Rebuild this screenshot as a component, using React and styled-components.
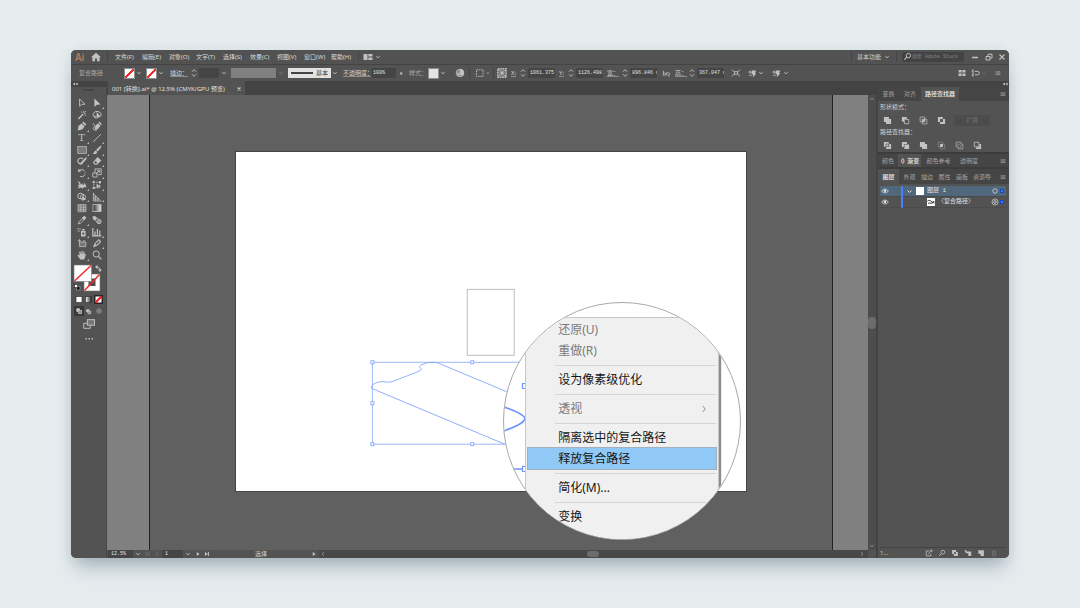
import React from 'react';
import styled, { createGlobalStyle, css } from 'styled-components';

const ui = '"Noto Sans", "Noto Sans CJK SC", sans-serif';
const mono = '"Liberation Mono", "Noto Sans CJK SC", monospace';

const Global = createGlobalStyle`
  * { box-sizing: border-box; }
  html, body { margin: 0; padding: 0; }
  body { background: #e7ecef; font-family: ${ui}; font-size: 6px; line-height: 8px; color: #c6c6c6; }
  button, input, select { font: inherit; color: inherit; border: 0; padding: 0; margin: 0; background: none; }
  svg { display: block; flex: none; }
`;

/* ---------- icons ---------- */

const S = (d, w = 1) => <path d={d} fill="none" stroke="currentColor" strokeWidth={w} />;
const F = (d) => <path d={d} fill="currentColor" fillRule="evenodd" />;

const icons = {
  home: F('M5 0.8 L10 5.2 H8.6 V9.2 H6 V6.4 H4 V9.2 H1.4 V5.2 H0 Z'),
  chevron: S('M2.8 4 L5 6 L7.2 4', 1.1),
  left: S('M6 2.5 L4 5 L6 7.5'),
  right: S('M4 2.5 L6 5 L4 7.5'),
  submenu: S('M4 2.5 L6 5 L4 7.5', 0.7),
  up: S('M2.8 6 L5 4 L7.2 6'),
  play: F('M3.4 2.4 L7 5 L3.4 7.6Z'),
  last: <>{F('M2.4 2.4 L6 5 L2.4 7.6Z')}{S('M6.8 2.4 V7.6', 1.2)}</>,
  first: <>{S('M3 2.4 V7.6')}{S('M7 2.5 L5 5 L7 7.5')}</>,
  stepper: S('M3 3.8 L5 1.6 L7 3.8 M3 6.2 L5 8.4 L7 6.2', 0.9),
  arrange: F('M0.5 2 H4.5 V8 H0.5Z M5.3 2 H9.5 V4.6 H5.3Z M5.3 5.4 H9.5 V8 H5.3Z'),
  search: <><circle cx="6" cy="4" r="2.4" fill="none" stroke="currentColor" />{S('M4.2 5.8 L1.5 8.6', 1.2)}</>,
  minimize: S('M2 5.5 H8', 1.4),
  restore: S('M2 4.5 H6 V8 H2Z M4 4.3 V2.2 H8 V6 H6.2'),
  close: S('M2.5 2.5 L7.5 7.5 M7.5 2.5 L2.5 7.5', 1.1),
  closeTab: S('M2.5 2.5 L7.5 7.5 M7.5 2.5 L2.5 7.5', 2),
  menu: S('M2 3.5 H8 M2 5.2 H8 M2 7 H8', 0.7),
  collapse: F('M5 3 V7 L2 5Z M8.4 3 V7 L5.4 5Z'),
  globe: <><circle cx="5" cy="5" r="3.8" fill="#8a8a8a" stroke="currentColor" strokeWidth="0.8" />{F('M5 1 A4 4 0 0 1 9 5 A4 4 0 0 1 6.6 8.6 L5 5Z')}<circle cx="4" cy="6" r="1.6" fill="#b8b8b8" /></>,
  align: <rect x="1.5" y="1.8" width="6.6" height="6.6" fill="none" stroke="currentColor" strokeDasharray="1.4 1" />,
  reference: <><rect x="0.8" y="0.8" width="8.4" height="8.4" fill="#777" stroke="currentColor" strokeWidth="1.4" strokeDasharray="1.6 0.8" />{F('M3.6 3.6 H6.4 V6.4 H3.6Z')}{S('M2 2 L3.6 3.6 M8 2 L6.4 3.6 M2 8 L3.6 6.4 M8 8 L6.4 6.4', 0.6)}</>,
  link: S('M1.5 2 V7 M1.5 4.6 H3 A1.2 1.2 0 0 1 3 7 H1.5 M6 4.2 A1.4 1.4 0 1 0 6 7 M5.4 4.2 H7 A1.4 1.4 0 0 1 7 7 L8.2 8.6', 0.9),
  transform: S('M1 1.6 L3.4 4 M9 1.6 L6.6 4 M1 8.4 L3.4 6 M9 8.4 L6.6 6 M3.4 3.7 H6.6 V6.3 H3.4Z', 0.9),
  isolate: <>{S('M0.6 3.4 H4 M2.2 1.8 V5 M1.4 7 H4', 1)}{F('M4.4 1.6 H9.2 L7.6 4.6 H9.4 L5.4 9.2 V5.6 H3.8Z')}</>,
  grid: F('M1.6 2 H4.6 V4.6 H1.6Z M5.4 2 H8.4 V4.6 H5.4Z M1.6 5.4 H4.6 V8 H1.6Z M5.4 5.4 H8.4 V8 H5.4Z'),
  snap: S('M2 1.4 V8.6 M4 3.4 H6.6 A1.6 1.6 0 0 1 6.6 6.8 H4 M0.8 3 H2 M0.8 7 H2', 1),
  select: S('M2.6 1 V8.2 L4.6 6.4 L8 6.2Z', 0.9),
  direct: F('M2.4 0.6 V9 L4.8 6.8 L8.6 6.4Z'),
  wand: <>{S('M1.4 9 L6 4.2', 1.4)}{S('M6.8 0.8 V3 M8.8 3.6 H7.2 M4 1.6 L5.4 2.8 M8.8 1.2 L7.6 2.4 M7.6 4.6 L8.6 5.8', 0.9)}</>,
  lasso: <>{S('M3.6 7.6 A4 3.2 0 1 1 8.6 6.2 M2.2 6.4 C3 5.4 4.4 6.4 3.4 8.4', 1)}{F('M4.6 2 V9 L6.4 7.2 L8.8 7Z')}</>,
  pen: F('M0.8 9.4 L1.4 5 L4.6 2.4 L7.6 5.4 L5.2 8.6Z M5.2 1.9 L6.4 0.6 L9.4 3.4 L8.2 4.8Z'),
  curve: <>{F('M2.6 8.8 L3.2 5 L6 2.2 L8.4 4.8 L6 8Z M6.6 1.6 L7.4 0.6 L9.8 3 L8.8 4.2Z')}{S('M0.6 3 C2.4 2 3 5 1.6 6.6 C0.4 8.6 2 9.8 5.4 8.8', 0.9)}</>,
  line: S('M1.2 9 L8.8 1.2', 0.9),
  rect: <rect x="0.8" y="1.6" width="8.6" height="6.8" fill="#7d7d7d" stroke="currentColor" strokeWidth="0.7" />,
  brush: F('M9.4 0.6 L9 2.6 L5.6 6.4 L4 5 L7.6 1.4Z M3.6 5.4 L5.2 6.9 C4.8 9 2.4 9.4 0.8 8.8 C2.4 8 1.8 6 3.6 5.4Z'),
  shaper: <>{S('M5.4 7.4 A3 2.8 0 1 1 6 3', 1.1)}{F('M10 1.4 L9 3.6 L5.4 7.8 L3.2 8.6 L4 6.2 L8.2 1.8Z')}</>,
  eraser: F('M5.6 1 L9.4 4.6 L5 8.8 H2.8 L0.8 6.6Z M2.2 6.4 L3.4 7.8 L4.6 7.6 L5.2 6.8 L3.6 5Z'),
  rotate: <><path d="M2.4 2.4 A3.6 3.6 0 1 1 3 8.4" fill="none" stroke="currentColor" strokeDasharray="6 1 1 1" />{F('M1 0.8 L1.4 4.2 L4.4 3Z')}</>,
  scale: S('M0.8 5 H5 V9 H0.8Z M3 4.6 V0.9 H9.2 V6.6 H5.6 M4 6 L7.4 2.6 M5.2 2.6 H7.4 V4.8', 0.9),
  warp: F('M0.8 1.4 C3.4 1.4 3.4 3.6 4 5 L5.2 3 L6 5.4 L7.8 2.8 L9.6 7.6 L7.4 7 L5.4 8.6 L3.6 7.4 L0.4 8.8 L2.2 6.4 L0.6 5.6 L2.6 4.6Z'),
  free: <><rect x="1.8" y="2.2" width="6" height="5.6" fill="none" stroke="currentColor" strokeDasharray="1.4 0.8" />{F('M0.6 1 H2.6 V3 H0.6Z M7 1 H9 V3 H7Z M0.6 7 H2.6 V9 H0.6Z M4.6 3.4 V8.6 L6 7.2 L8.6 7Z')}</>,
  shape: <><circle cx="3.6" cy="4" r="2.8" fill="none" stroke="currentColor" /><circle cx="6" cy="5" r="2.6" fill="none" stroke="currentColor" strokeWidth="0.8" />{F('M5.4 4 V9.4 L6.8 8 L9.2 7.8Z')}</>,
  perspective: S('M1.4 0.8 V9 L9.4 9 M1.4 1.6 L8.4 8.2 M1.4 5 H4.6 M3.4 3.6 V9 M5.8 6 V9 M1.4 7 H6.8', 0.8),
  mesh: <><rect x="1" y="1.6" width="8" height="7" fill="#777" />{S('M1 1.6 H9 V8.6 H1Z M1 4 C4 2.6 6 6 9 4 M1 6.6 C4 5 6 8 9 6.4 M3.6 1.6 C5 4 2.6 6 4 8.6 M6.4 1.6 C7.6 4 5.4 6 6.6 8.6', 0.7)}</>,
  gradient: <rect x="1" y="1.6" width="8" height="7" fill="url(#ramp)" stroke="currentColor" strokeWidth="0.8" />,
  dropper: <>{S('M1.2 9 L2 6.8 L5.4 3.4 L6.8 4.8 L3.4 8.2Z', 0.9)}{F('M4.8 2.6 L6 2 L7.4 0.8 L9.4 2.8 L8 4.2 L7.6 5.4Z')}</>,
  blend: <>{F('M0.8 1 L4 1.6 L5.6 4.6 L3 5.6 L0.8 4Z')}<circle cx="7" cy="6.6" r="2.1" fill="#8a8a8a" stroke="currentColor" /><circle cx="5" cy="4.8" r="1.6" fill="#707070" stroke="currentColor" strokeWidth="0.7" /></>,
  spray: <>{F('M4 4 H8.6 V9.4 H4Z M5 2 H7.6 V3.4 H5Z M0.6 1 H1.8 V2.2 H0.6Z M2.6 1.2 H3.6 V2.4 H2.6Z M0.6 3.4 H1.6 V4.6 H0.6Z M2.2 3.4 H3.2 V4.4 H2.2Z')}<circle cx="6.3" cy="6.6" r="1.1" fill="#535353" /></>,
  graph: S('M0.8 1 V8.8 H9.4 M3 8.4 V4.6 M5.4 8.4 V2 M7.8 8.4 V3.4', 1.2),
  artboard: <><rect x="2.4" y="4" width="6.4" height="4.6" fill="#777" />{S('M0.6 2.8 H4 M2.4 1 V4 M2.4 4 H8.8 V8.6 H2.4Z M6 2.8 H8', 0.8)}</>,
  slice: F('M1 9.4 L2.4 5.6 L6.6 1 L9.4 3.4 L5.6 7.4Z M3.2 6 L4.4 7 L7.8 3.6 L6.6 2.6Z'),
  hand: F('M2.6 5.6 L1 4.6 L0.6 5.6 L3.2 9.4 H7.2 L9 4.2 L8 3.8 L7.2 5.2 L7.6 1.6 L6.6 1.4 L5.8 4.6 L5.4 0.8 L4.4 0.8 L4.4 4.6 L3.2 1.4 L2.2 1.8Z'),
  zoom: <><circle cx="4.2" cy="4" r="3.1" fill="none" stroke="currentColor" />{S('M6.4 6.4 L9.2 9.2', 1.3)}</>,
  drawNormal: <><circle cx="4" cy="4" r="2.6" fill="currentColor" /><rect x="4.4" y="4.4" width="4" height="4" fill="#8d8d8d" stroke="currentColor" strokeWidth="0.8" /></>,
  drawInside: <><circle cx="5" cy="5" r="2.8" fill="none" stroke="currentColor" strokeWidth="0.7" />{F('M4.4 3.6 L6.8 5 L4.4 6.4Z')}</>,
  screen: <>{S('M0.6 4.4 H6 V8.6 H0.6Z', 0.8)}<rect x="3.6" y="1.4" width="6" height="4.6" fill="#777" stroke="currentColor" strokeWidth="0.8" /></>,
  unite: F('M1 1 H6.6 V3.4 H9 V9 H3.4 V6.6 H1Z'),
  minusFront: <>{F('M1 1 H6.4 V3.4 H3.4 V6.4 H1Z')}{S('M3.8 3.8 H8.6 V8.6 H3.8Z', 0.9)}</>,
  intersect: <>{S('M1.2 1.2 H6.4 V6.4 H1.2Z M3.6 3.6 H8.8 V8.8 H3.6Z', 0.8)}{F('M3.6 3.6 H6.4 V6.4 H3.6Z')}</>,
  exclude: F('M1 1 H6.6 V3.4 H9 V9 H3.4 V6.6 H1Z M3.4 3.4 V6.6 H6.6 V3.4Z'),
  divide: <>{F('M1 1 H6.4 V3.4 H9 V9 H3.4 V6.4 H1Z')}<path d="M3.4 6.2 V3.4 H6.4 V6.4 H3.4" stroke="#535353" strokeWidth="0.8" fill="none" /></>,
  trim: <>{F('M1 1 H6.6 V3.4 H3.2 V6.6 H1Z M3.8 4 H9 V9 H3.8Z')}</>,
  crop: <>{S('M1.4 1.4 H6.4 V3.4 M1.4 1.4 V6.4 H3.4 M6.6 3.6 H8.6 V8.6 H3.6 V6.6', 0.4)}{F('M3.4 3.4 H6.6 V6.6 H3.4Z')}</>,
  outline: S('M1.3 1.3 H6.5 V3.5 H8.7 V8.7 H3.5 V6.5 H1.3Z M3.5 3.5 H5 M3.5 3.5 V5 M6.5 6.5 V5 M6.5 6.5 H5', 0.7),
  minusBack: <>{S('M1.4 1.4 H6.4 V6.4 H1.4Z', 0.9)}{F('M7 3.4 H9 V9 H3.4 V7 H7Z')}</>,
  eye: <>{S('M0.8 5 C3 1.8 7 1.8 9.2 5 C7 8.2 3 8.2 0.8 5Z', 1)}<circle cx="5" cy="4.8" r="1.7" fill="currentColor" /></>,
  ring: <circle cx="5" cy="5" r="2.8" fill="none" stroke="currentColor" strokeWidth="0.9" />,
  target: <><circle cx="5" cy="5" r="3.8" fill="none" stroke="currentColor" strokeWidth="0.8" /><circle cx="5" cy="5" r="1.7" fill="none" stroke="currentColor" strokeWidth="0.9" /></>,
  export: S('M5 2.4 H1.6 V8.6 H7.4 V6 M4 6 L8.4 1.6 M6 1.4 H8.6 V4', 1),
  mask: <>{F('M1.4 1.4 H6.4 V3.6 H8.6 V8.6 H3.6 V6.4 H1.4Z')}<circle cx="5" cy="5" r="1.2" fill="#4c4c4c" /></>,
  sublayer: F('M0.6 1.6 H3 V3 H9 V8.6 H5.4 V5.4 H2.4Z'),
  newLayer: F('M1.6 1.6 H8.6 V8.6 H4.4 V5.8 H1.6Z'),
  trash: S('M2 2.8 H8 M3 2.8 V8.6 H7 V2.8 M4 1.6 H6 M5 4 V7.4', 0.9),
};

const Icon = ({ name, size = 10, dim, ...rest }) => (
  <svg width={size} height={size} viewBox="0 0 10 10" opacity={dim ? 0.35 : 1} aria-hidden="true" {...rest}>
    {name === 'gradient' && (
      <defs>
        <linearGradient id="ramp"><stop offset="0" stopColor="#2e2e2e" /><stop offset="1" stopColor="#eee" /></linearGradient>
      </defs>
    )}
    {icons[name]}
  </svg>
);

/* ---------- shared parts ---------- */

const IconButton = styled.button`
  display: flex;
  align-items: center;
  justify-content: center;
  align-self: center;
  flex: none;
  width: ${(p) => p.$w || 10}px;
  height: 10px;
  margin-left: ${(p) => p.$gap || 0}px;
  border-radius: 1px;
  background: ${(p) => (p.$on ? '#383838' : 'none')};
  color: ${(p) => (p.$dim ? '#777' : '#c2c2c2')};
`;

const Tool = ({ icon, label, size, ...rest }) => (
  <IconButton type="button" aria-label={label} {...rest}><Icon name={icon} size={size} /></IconButton>
);

const Divider = styled.span`
  flex: none;
  width: 1px;
  height: 11px;
  margin-left: ${(p) => p.$gap || 0}px;
  background: #454545;
`;

const Spacer = styled.span`flex: 1;`;

/* ---------- window ---------- */

const Page = styled.main`
  min-height: 100vh;
  display: flex;
  padding: 50px 71px;
`;

const Frame = styled.div`
  flex: 1;
  min-width: 0;
  display: flex;
  border-radius: 5px;
  box-shadow: 0 14px 18px -5px rgba(112, 134, 146, 0.5), 0 2px 12px rgba(130, 150, 160, 0.22);
`;

const Window = styled.div`
  flex: 1;
  min-width: 0;
  display: flex;
  flex-direction: column;
  border-radius: 5px;
  overflow: hidden;
  background: #535353;
`;

const MenuBar = styled.header`
  display: flex;
  align-items: center;
  height: 15px;
  padding: 0 2px 1px 4px;
  background: #525252;
  border-bottom: 1px solid #434343;
`;

const Logo = styled.span`
  width: 12px;
  font: 600 10px/12px "Open Sans", sans-serif;
  color: #b98060;
`;

const Menus = styled.nav`
  display: grid;
  grid-template-columns: repeat(9, 27px);
  margin-left: 7px;
`;

const MenuButton = styled.button`
  text-align: left;
  white-space: nowrap;
  color: #dadada;
`;

const Search = styled.label`
  display: flex;
  align-items: center;
  width: 62px;
  height: 10px;
  margin: 0 6px 0 5px;
  padding-left: 1px;
  background: #434343;
  border-radius: 2px;
  input { width: 50px; font: 5px/8px ${mono}; outline: 0; }
  input::placeholder { color: #858585; opacity: 1; }
`;

const ControlBar = styled.div`
  display: flex;
  align-items: center;
  height: 16px;
  padding: 0 6px 0 8px;
  background: #535353;
  overflow: hidden;
`;

const Label = styled.label`
  flex: none;
  width: ${(p) => p.$w}px;
  margin-left: ${(p) => p.$gap || 0}px;
  white-space: nowrap;
  color: ${(p) => (p.$soft ? '#ababab' : '#d4d4d4')};
  ${(p) => p.$line && css`text-decoration: underline; text-decoration-color: #8b8b8b; text-underline-offset: 1px;`}
`;

const Field = styled.input`
  flex: none;
  width: ${(p) => p.$w}px;
  height: 10px;
  padding-left: 2px;
  background: #454545;
  border-radius: 1px;
  font: 5px/10px ${mono};
  color: #e2e2e2;
  outline: 0;
`;

const Swatch = styled.button`
  flex: none;
  width: 11px;
  height: 11px;
  margin-left: ${(p) => p.$gap || 0}px;
  border: 1px solid #8e8e8e;
  background: ${(p) => (p.$none ? 'linear-gradient(135deg, #fff 42%, #f02c2c 42%, #f02c2c 58%, #fff 58%)' : '#e3e3e3')};
`;

const Profile = styled.button`
  flex: none;
  width: 45px;
  height: 10px;
  margin-left: 2px;
  background: #808080;
`;

const BrushButton = styled.button`
  flex: none;
  display: flex;
  align-items: center;
  gap: 3px;
  width: 43px;
  height: 10px;
  padding: 0 3px;
  margin-left: 2px;
  background: #e2e2e2;
  color: #333;
  white-space: nowrap;
`;

const BrushLine = styled.span`flex: 1; height: 2px; background: #444;`;

/* ---------- body ---------- */

const Body = styled.div`
  flex: 1;
  min-height: 0;
  display: flex;
`;

const Toolbar = styled.aside`
  width: 36px;
  flex: none;
  background: #535353;
  border-right: 1px solid #464646;
`;

const Grip = styled.div`
  display: flex;
  align-items: center;
  justify-content: ${(p) => (p.$end ? 'flex-end' : 'flex-start')};
  height: 6px;
  background: #434343;
  color: #bbb;
`;

const Handle = styled.div`
  width: 11px;
  height: 2px;
  margin: 2px auto 6px;
  background: #454545;
`;

const ToolGrid = styled.div`
  display: grid;
  grid-template-columns: 15px 15px;
  grid-template-rows: repeat(14, 1fr);
  height: 164px;
  margin: 0 0 0 3px;
`;

const ToolCell = styled.button`
  position: relative;
  display: flex;
  align-items: center;
  justify-content: center;
  color: #c2c2c2;
  &::after {
    content: '';
    display: ${(p) => (p.$more ? 'block' : 'none')};
    position: absolute;
    right: 0;
    bottom: 0;
    border: 1px solid transparent;
    border-right-color: #bbb;
    border-bottom-color: #bbb;
  }
`;

const TypeGlyph = styled.span`font: 10px/10px "DejaVu Serif", serif;`;

const Swatches = styled.svg`margin: 3px 0 0 2px;`;

const ToolRow = styled.div`
  display: flex;
  justify-content: center;
  align-items: center;
  height: ${(p) => p.$h || 12}px;
`;

const Workspace = styled.section`
  flex: 1;
  min-width: 0;
  display: flex;
  flex-direction: column;
`;

const TabStrip = styled.div`
  display: flex;
  height: 14px;
  background: #434343;
`;

const DocTab = styled.div`
  display: flex;
  align-items: center;
  gap: 5px;
  margin: 0 0 0 1px;
  padding: 1px 1px 0 4px;
  width: 137px;
  background: #535353;
  color: #e0e0e0;
  white-space: nowrap;
`;

const DocName = styled.span`flex: 1;`;

const Stage = styled.div`
  flex: 1;
  min-height: 0;
  display: flex;
`;

const Pasteboard = styled.div`
  flex: 1;
  min-width: 0;
  display: flex;
  padding: 0 35px 0 42px;
  background: #808080;
`;

const Canvas = styled.div`
  flex: 1;
  display: flex;
  align-items: center;
  justify-content: center;
  background: #606060;
  border: solid #222;
  border-width: 0 1px;
`;

const Artboard = styled.div`
  position: relative;
  width: 75%;
  aspect-ratio: 512 / 342;
  margin-bottom: 2px;
  background: #fff;
  border: 1px solid #444;
`;

const Drawing = styled.svg`width: 100%; height: 100%;`;

const Lens = styled.div`
  position: absolute;
  left: 267px;
  top: 150px;
  width: 238px;
  height: 238px;
  border: 1px solid #a9a9a9;
  border-radius: 50%;
  overflow: hidden;
  background: #fff;
`;

const LensArt = styled.svg`
  position: absolute;
  left: 0;
  top: 0;
`;

const ContextMenu = styled.div`
  position: relative;
  width: 194px;
  margin: 14px 0 0 21px;
  height: 230px;
  padding: 1px 2px;
  background: #f0f0f0;
  border: 1px solid #c6c6c6;
  box-shadow: 2px 2px 1px #8d8d8d;
`;

const ContextItem = styled.button`
  display: flex;
  align-items: center;
  justify-content: space-between;
  width: 100%;
  height: 21px;
  padding: 1px 6px 0 30px;
  font: 12px/20px ${ui};
  white-space: nowrap;
  color: ${(p) => (p.disabled ? '#7b7b7b' : '#161616')};
  ${(p) => p.$active && css`background: #90c8f6; box-shadow: 0 0 0 1px #a4b1bc;`}
`;

const ContextRule = styled.hr`
  height: 8px;
  margin: 0 0 0 27px;
  border: 0;
  background: linear-gradient(#d5d5d5, #d5d5d5) 0 4px / 100% 1px no-repeat;
`;

const Scroll = styled.div`
  flex: none;
  width: 8px;
  display: flex;
  flex-direction: column;
  align-items: center;
  justify-content: space-between;
  background: #4d4d4d;
  color: #999;
`;

const Thumb = styled.span`
  width: ${(p) => (p.$wide ? 12 : 8)}px;
  height: ${(p) => (p.$wide ? 6 : 12)}px;
  border-radius: 4px;
  background: #6c6c6c;
`;

const Status = styled.footer`
  display: flex;
  align-items: center;
  height: 8px;
  background: #535353;
  overflow: hidden;
`;

const Pick = styled.select`
  appearance: none;
  width: ${(p) => p.$w}px;
  height: 8px;
  margin-left: 1px;
  padding-left: 3px;
  font: 5px/8px ${mono};
  background: #454545;
  color: #e6e6e6;
  outline: 0;
`;

const StatusText = styled.span`margin: 0 42px 0 44px; color: #d2d2d2;`;

const HTrack = styled.div`
  flex: 1;
  display: flex;
  align-items: center;
  justify-content: space-between;
  height: 8px;
  padding-right: 2px;
  background: #484848;
  color: #999;
`;

/* ---------- panels ---------- */

const Panels = styled.aside`
  flex: none;
  width: 133px;
  display: flex;
  flex-direction: column;
  background: #535353;
  border-left: 2px solid #434343;
`;

const Tabs = styled.div`
  display: flex;
  align-items: stretch;
  height: ${(p) => p.$h || 14}px;
  padding-right: 1px;
  border-top: ${(p) => (p.$split ? '2px solid #3c3c3c' : '0')};
  background: #454545;
`;

const Tab = styled.button`
  flex: none;
  width: ${(p) => p.$w}px;
  text-align: center;
  white-space: nowrap;
  background: ${(p) => (p.$on ? '#535353' : 'none')};
  color: ${(p) => (p.$on ? '#ececec' : '#a3a3a3')};
  font-weight: ${(p) => (p.$on ? 500 : 400)};
`;

const Pathfinder = styled.div`
  height: 51px;
  padding: 2px 0 0 2px;
`;

const PanelLabel = styled.div`
  height: 9px;
  line-height: 9px;
  color: #d2d2d2;
`;

const Ops = styled.div`
  display: flex;
  align-items: center;
  height: 16px;
  gap: 8px;
  padding-left: 2px;
`;

const Expand = styled.button`
  width: 36px;
  height: 11px;
  background: #4c4c4c;
  color: #6d6d6d;
`;

const Layers = styled.div`
  flex: 1;
  margin: 2px 3px 0 2px;
  border-bottom: 1px solid #444;
`;

const LayerRow = styled.div`
  display: flex;
  align-items: center;
  height: 11px;
  padding-left: 1px;
  background: ${(p) => (p.$on ? '#50677c' : 'none')};
  border-bottom: 1px solid #4a4a4a;
  color: #e0e0e0;
`;

const LayerBar = styled.span`
  width: 2px;
  height: 11px;
  margin: 0 ${(p) => p.$after}px 0 12px;
  background: #4a7dff;
`;

const LayerThumb = styled.span`
  width: 8px;
  height: 8px;
  margin: 0 3px 0 2px;
  background: #fff;
  color: #222;
`;

const LayerName = styled.span`flex: 1; font-family: ${mono}; white-space: nowrap;`;

const Mark = styled.span`
  width: 4px;
  height: 4px;
  margin: 0 2px 0 1px;
  border: 1px solid #1647c8;
  background: #3f78ff;
`;

const PanelFooter = styled.footer`
  display: flex;
  align-items: center;
  height: 10px;
  padding: 0 10px 0 2px;
  gap: 3px;
`;

/* ---------- data ---------- */

const menus = ['文件(F)', '编辑(E)', '对象(O)', '文字(T)', '选择(S)', '效果(C)', '视图(V)', '窗口(W)', '帮助(H)'];

const tools = [
  ['select', '选择'], ['direct', '直接选择', 1],
  ['wand', '魔棒'], ['lasso', '套索'],
  ['pen', '钢笔', 1], ['curve', '曲率'],
  ['type', '文字', 1], ['line', '直线段', 1],
  ['rect', '矩形', 1], ['brush', '画笔', 1],
  ['shaper', 'Shaper', 1], ['eraser', '橡皮擦', 1],
  ['rotate', '旋转', 1], ['scale', '比例缩放', 1],
  ['warp', '变形', 1], ['free', '自由变换', 1],
  ['shape', '形状生成器', 1], ['perspective', '透视网格', 1],
  ['mesh', '网格'], ['gradient', '渐变'],
  ['dropper', '吸管', 1], ['blend', '混合'],
  ['spray', '符号喷枪', 1], ['graph', '柱形图', 1],
  ['artboard', '画板'], ['slice', '切片', 1],
  ['hand', '抓手', 1], ['zoom', '缩放'],
];

const handles = [[137, 210], [237, 210], [137, 251], [137, 292], [237, 292]];

/* ---------- sections ---------- */

const NumberField = ({ id, label, value, w, gap }) => (
  <>
    <Label htmlFor={id} $w={w} $gap={gap} $line>{label}</Label>
    <Tool icon="stepper" label={`${label} 步进`} />
    <Field id={id} $w={27} defaultValue={value} />
  </>
);

const Controls = () => (
  <ControlBar>
    <Label as="span" $w={45} $soft>复合路径</Label>
    <Swatch $none type="button" aria-label="填色" />
    <Tool icon="chevron" label="填色选项" $w={8} size={8} />
    <Swatch $none $gap={3} type="button" aria-label="描边颜色" />
    <Tool icon="chevron" label="描边选项" $w={8} size={8} />
    <Label htmlFor="stroke" $w={19} $gap={5} $line>描边：</Label>
    <Tool icon="stepper" label="描边步进" />
    <Field id="stroke" $w={20} />
    <Tool icon="chevron" label="描边粗细" size={8} />
    <Profile type="button" aria-label="变量宽度" />
    <Tool icon="chevron" label="宽度配置" size={8} $dim />
    <BrushButton type="button"><BrushLine />基本</BrushButton>
    <Tool icon="chevron" label="画笔定义" $w={8} size={8} />
    <Label htmlFor="opacity" $w={28} $gap={4} $line>不透明度：</Label>
    <Spacer hidden />
    <Field id="opacity" $w={25} defaultValue="100%" />
    <Tool icon="play" label="不透明度滑块" size={7} $w={11} />
    <Label as="span" $w={16} $gap={2} $soft>样式：</Label>
    <Swatch $gap={3} type="button" aria-label="图形样式" />
    <Tool icon="chevron" label="样式选项" $w={8} size={8} />
    <Tool icon="globe" label="重新着色" $gap={8} />
    <Divider $gap={4} />
    <Tool icon="align" label="对齐" $gap={5} />
    <Tool icon="chevron" label="对齐选项" $w={5} size={6} />
    <Divider $gap={3} />
    <Tool icon="reference" label="参考点" $gap={3} />
    <NumberField id="x" label="X:" value="1061.375" w={7} gap={4} />
    <NumberField id="y" label="Y:" value="1126.498" w={7} gap={4} />
    <NumberField id="w" label="宽：" value="896.846 m" w={13} gap={4} />
    <Tool icon="link" label="约束比例" $gap={4} size={9} />
    <NumberField id="h" label="高：" value="367.047 m" w={12} gap={4} />
    <Tool icon="transform" label="变换" $gap={7} />
    <Tool icon="isolate" label="隔离" $gap={6} size={9} />
    <Tool icon="chevron" label="隔离选项" $w={8} size={8} />
    <Tool icon="isolate" label="编辑相似形状" $gap={6} size={9} />
    <Tool icon="chevron" label="相似选项" $w={10} size={8} />
    <Spacer />
    <Tool icon="grid" label="像素网格" />
    <Tool icon="snap" label="贴紧" $gap={4} />
    <Tool icon="chevron" label="贴紧选项" $w={6} size={6} $dim />
    <Tool icon="menu" label="面板菜单" $gap={6} size={8} />
  </ControlBar>
);

const Artwork = () => (
  <Drawing viewBox="1 1 510 340" fill="none" aria-hidden="true">
    <rect x="232.5" y="138.5" width="47" height="66" stroke="#bdbdbd" />
    <g stroke="#85a5fa" strokeWidth="0.9">
      <path d="M137 211.5 H300 M137.5 211 V293 M137 293.5 H290" strokeWidth="0.8" />
      <path d="M272 241 L206 213.4 C200 210.6 193 211 187 214 C183 215.6 185 216 186.5 218.6 C185 221 178 222.6 157 231 C151 232.4 149 229.4 142 231.8 C137 234 136 235 136.8 237.6 L270 293.5" />
      <g fill="#fff">
        {handles.map(([x, y]) => (
          <rect key={`${x}-${y}`} x={x - 1} y={y} width="3" height="3" />
        ))}
      </g>
    </g>
  </Drawing>
);

const Magnifier = () => (
  <Lens>
    <LensArt width="22" height="238" viewBox="0 0 22 238" fill="none" stroke="#6f95fb" aria-hidden="true">
      <path d="M0 104 C12 108 20 112 21 115.5 C20 120 12 123 0 128" strokeWidth="1.7" />
      <path d="M10 166 H19" strokeWidth="1.4" />
      <path d="M22 80.5 H18.5 V85.5 H22 M22 163.5 H18.5 V168.5 H22" strokeWidth="1.2" />
    </LensArt>
    <ContextMenu role="menu">
      <ContextItem role="menuitem" disabled>还原(U)</ContextItem>
      <ContextItem role="menuitem" disabled>重做(R)</ContextItem>
      <ContextRule />
      <ContextItem role="menuitem">设为像素级优化</ContextItem>
      <ContextRule />
      <ContextItem role="menuitem" disabled>透视<Icon name="submenu" size={12} /></ContextItem>
      <ContextRule />
      <ContextItem role="menuitem">隔离选中的复合路径</ContextItem>
      <ContextItem role="menuitem" $active>释放复合路径</ContextItem>
      <ContextRule />
      <ContextItem role="menuitem">简化(M)...</ContextItem>
      <ContextRule />
      <ContextItem role="menuitem">变换</ContextItem>
    </ContextMenu>
  </Lens>
);

const ToolPanel = () => (
  <Toolbar>
    <Grip><Icon name="collapse" size={8} /></Grip>
    <Handle />
    <ToolGrid>
      {tools.map(([name, label, more]) => (
        <ToolCell key={name} type="button" aria-label={label} $more={more}>
          {name === 'type' ? <TypeGlyph>T</TypeGlyph> : <Icon name={name} />}
        </ToolCell>
      ))}
    </ToolGrid>
    <Swatches width="30" height="29" viewBox="0 0 30 29" aria-hidden="true">
      <rect x="11" y="10" width="16" height="17" fill="#fff" stroke="#777" strokeWidth="0.6" />
      <rect x="15.5" y="14.5" width="7" height="7.5" fill="#4f4f4f" />
      <path d="M11.5 26.5 L26.5 10.5" stroke="#ee2b2b" strokeWidth="1.5" />
      <rect x="1" y="1" width="17.5" height="16.5" fill="#fff" stroke="#777" strokeWidth="0.6" />
      <path d="M1.5 17 L18 1.5" stroke="#ee2b2b" strokeWidth="1.5" />
      <path d="M23.5 3 C26 3 27 4 27 6.5" stroke="#c4c4c4" fill="none" />
      <path d="M24.5 0.8 L22 3 L24.5 5.2 Z M24.8 5.6 H29 L27 8 Z" fill="#c4c4c4" />
      <rect x="3.5" y="22.5" width="3.5" height="3.5" fill="#111" stroke="#aaa" strokeWidth="0.6" />
      <rect x="1.5" y="20.5" width="3" height="3" fill="#fff" stroke="#222" strokeWidth="0.6" />
    </Swatches>
    <ToolRow>
      <svg width="29" height="9" viewBox="0 0 29 9" aria-hidden="true">
        <defs><linearGradient id="fade"><stop offset="0" stopColor="#fff" /><stop offset="1" stopColor="#222" /></linearGradient></defs>
        <rect x="2" y="1.5" width="6" height="6" fill="#fff" stroke="#333" strokeWidth="0.7" />
        <rect x="11.5" y="1.5" width="6" height="6" fill="url(#fade)" stroke="#333" strokeWidth="0.7" />
        <rect x="20" y="0" width="9" height="9" fill="#262626" />
        <rect x="21.5" y="1.5" width="6" height="6" fill="#fff" />
        <path d="M21.5 7.5 L27.5 1.5" stroke="#f01818" strokeWidth="2.2" />
      </svg>
    </ToolRow>
    <ToolRow>
      <Tool icon="drawNormal" label="正常绘图" size={8} $on />
      <Tool icon="drawNormal" label="背面绘图" size={7} />
      <Tool icon="drawInside" label="内部绘图" size={8} />
    </ToolRow>
    <ToolRow $h={14}><Tool icon="screen" label="屏幕模式" size={12} $w={12} /></ToolRow>
    <ToolRow $h={14}>
      <svg width="10" height="10" viewBox="0 0 10 10" fill="#bcbcbc" aria-hidden="true">
        <rect x="1.5" y="5" width="1.5" height="1.5" /><rect x="4.5" y="5" width="1.5" height="1.5" /><rect x="7.5" y="5" width="1.5" height="1.5" />
      </svg>
    </ToolRow>
  </Toolbar>
);

const PanelMenu = () => <Tool icon="menu" label="面板菜单" size={8} />;

const SidePanels = () => (
  <Panels>
    <Grip $end><Icon name="collapse" size={8} /></Grip>
    <Tabs $h={14}>
      <Tab $w={21}>变换</Tab><Tab $w={22}>对齐</Tab><Tab $w={38} $on>路径查找器</Tab>
      <Spacer /><PanelMenu />
    </Tabs>
    <Pathfinder>
      <PanelLabel>形状模式：</PanelLabel>
      <Ops>
        {['unite', 'minusFront', 'intersect', 'exclude'].map((n) => <Tool key={n} icon={n} label={n} size={9} />)}
        <Expand type="button">扩展</Expand>
      </Ops>
      <PanelLabel>路径查找器：</PanelLabel>
      <Ops>
        {['divide', 'trim', 'unite', 'crop', 'outline', 'minusBack'].map((n) => <Tool key={n} icon={n} label={n} size={9} />)}
      </Ops>
    </Pathfinder>
    <Tabs $h={15} $split>
      <Tab $w={20}>颜色</Tab><Tab $w={23} $on>◊ 渐变</Tab><Tab $w={35}>颜色参考</Tab><Tab $w={26}>透明度</Tab>
      <Spacer /><PanelMenu />
    </Tabs>
    <Tabs $h={17} $split>
      <Tab $w={21} $on>图层</Tab><Tab $w={21}>外观</Tab><Tab $w={14}>描边</Tab><Tab $w={21}>属性</Tab><Tab $w={14}>画板</Tab><Tab $w={26}>资源导</Tab>
      <Spacer /><PanelMenu />
    </Tabs>
    <Layers>
      <LayerRow $on>
        <Icon name="eye" size={8} />
        <LayerBar $after={2} />
        <Icon name="chevron" size={9} />
        <LayerThumb />
        <LayerName>图层 1</LayerName>
        <Icon name="ring" size={8} /><Mark />
      </LayerRow>
      <LayerRow>
        <Icon name="eye" size={8} />
        <LayerBar $after={22} />
        <LayerThumb>
          <svg width="8" height="8" viewBox="0 0 8 8" fill="none" stroke="currentColor" aria-hidden="true">
            <path d="M0.5 3 C3 1 4 4 7.5 5 M1 5.5 C3 4 5 7 7 3" />
          </svg>
        </LayerThumb>
        <LayerName>〈复合路径〉</LayerName>
        <Icon name="target" size={8} /><Mark />
      </LayerRow>
    </Layers>
    <PanelFooter>
      1...
      <Spacer />
      {['export', 'search', 'mask', 'sublayer', 'newLayer'].map((n) => <Tool key={n} icon={n} label={n} size={8} />)}
      <Tool icon="trash" label="删除" size={8} $dim />
    </PanelFooter>
  </Panels>
);

export default function App() {
  return (
    <>
      <Global />
      <Page>
        <Frame>
          <Window>
            <MenuBar>
              <Logo>Ai</Logo>
              <Tool icon="home" label="主页" $gap={4} />
              <Divider $gap={6} />
              <Menus>{menus.map((m) => <MenuButton key={m} type="button">{m}</MenuButton>)}</Menus>
              <Divider />
              <Tool icon="arrange" label="排列文档" $gap={4} />
              <Tool icon="chevron" label="排列选项" size={8} />
              <Spacer />
              <Divider />
              <MenuButton type="button"><Label as="span" $gap={5}>基本功能</Label></MenuButton>
              <Tool icon="chevron" label="工作区" size={8} $gap={1} />
              <Divider $gap={4} />
              <Search><Icon name="search" size={9} /><input placeholder="搜索 Adobe Stock" aria-label="搜索 Adobe Stock" /></Search>
              <Tool icon="minimize" label="最小化" />
              <Tool icon="restore" label="还原" $gap={4} />
              <Tool icon="close" label="关闭" $gap={3} />
            </MenuBar>
            <Controls />
            <Body>
              <ToolPanel />
              <Workspace>
                <TabStrip>
                  <DocTab>
                    <DocName>001 [转换].ai* @ 12.5% (CMYK/GPU 预览)</DocName>
                    <Tool icon="closeTab" label="关闭文档" size={6} />
                  </DocTab>
                </TabStrip>
                <Stage>
                  <Pasteboard>
                    <Canvas>
                      <Artboard><Artwork /><Magnifier /></Artboard>
                    </Canvas>
                  </Pasteboard>
                  <Scroll><Icon name="up" size={8} /><Thumb /><Icon name="chevron" size={8} /></Scroll>
                </Stage>
                <Status>
                  <Pick $w={25} aria-label="缩放级别"><option>12.5%</option></Pick>
                  <Tool icon="chevron" label="缩放选项" size={8} />
                  <Tool icon="first" label="首页" size={8} $dim />
                  <Tool icon="left" label="上一页" size={8} $w={8} $dim />
                  <Pick $w={21} aria-label="画板"><option>1</option></Pick>
                  <Tool icon="chevron" label="画板选项" size={8} />
                  <Tool icon="play" label="下一页" size={8} />
                  <Tool icon="last" label="末页" size={8} $w={8} />
                  <StatusText>选择</StatusText>
                  <Tool icon="play" label="状态菜单" size={8} />
                  <HTrack><Icon name="left" size={8} /><Thumb $wide /><Icon name="right" size={8} /></HTrack>
                  <Scroll />
                </Status>
              </Workspace>
              <SidePanels />
            </Body>
          </Window>
        </Frame>
      </Page>
    </>
  );
}
